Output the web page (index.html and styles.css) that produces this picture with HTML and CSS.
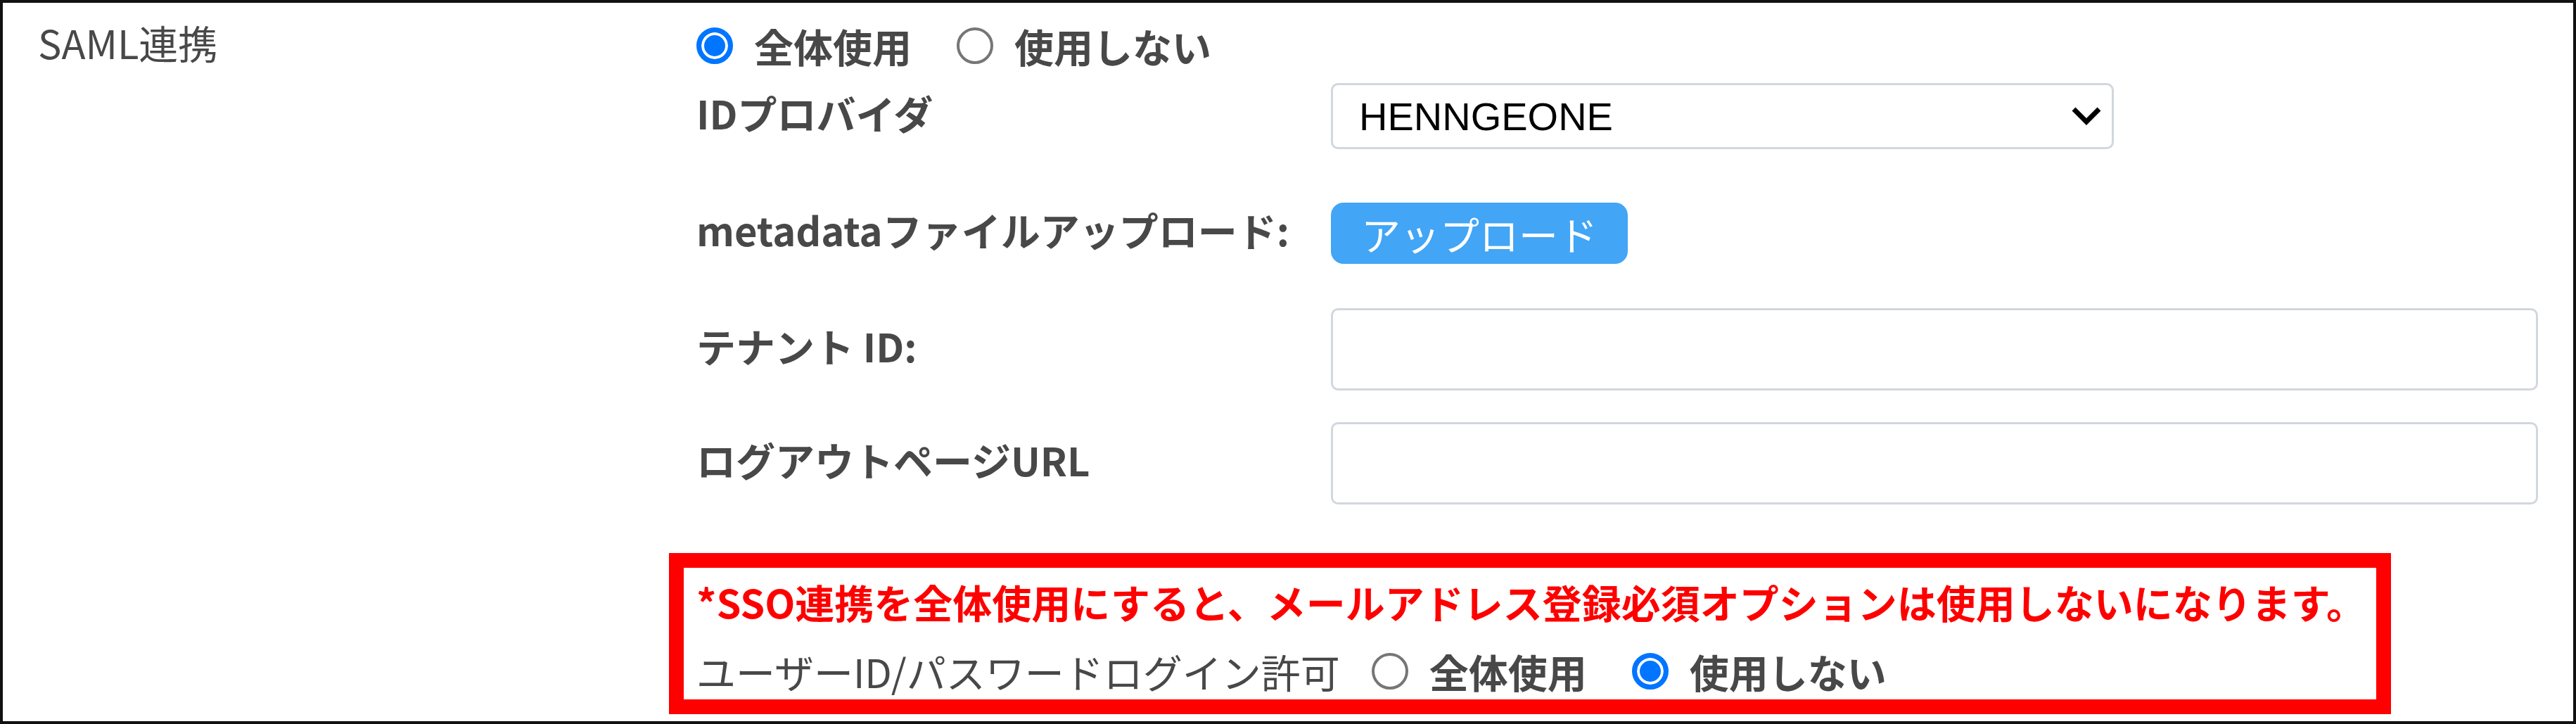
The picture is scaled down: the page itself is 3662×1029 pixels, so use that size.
FILE: index.html
```html
<!DOCTYPE html>
<html lang="ja">
<head>
  <meta charset="utf-8">
  <meta name="viewport" content="width=device-width, initial-scale=1">
  <title>SSO設定</title>
  <link rel="stylesheet" href="styles.css">
</head>
<body>
  <div class="setting-panel">
    <div class="setting-name">SAML連携</div>

    <div class="setting-body">
      <div class="row row-mode">
        <div class="radio-group">
          <label class="radio-option">
            <input type="radio" name="saml" class="radio" checked>
            <span>全体使用</span>
          </label>
          <label class="radio-option">
            <input type="radio" name="saml" class="radio">
            <span>使用しない</span>
          </label>
        </div>
      </div>

      <div class="row field row-provider">
        <span class="field-label">IDプロバイダ</span>
        <div class="select-box">
          <span class="select-value">HENNGEONE</span>
          <svg class="chevron" width="44" height="28" viewBox="0 0 44 28">
            <path d="M4 4 L22 22 L40 4" fill="none" stroke="#000" stroke-width="7"/>
          </svg>
        </div>
      </div>

      <div class="row field row-metadata">
        <span class="field-label">metadataファイルアップロード:</span>
        <button class="upload-button" type="button">アップロード</button>
      </div>

      <div class="row field row-tenant">
        <span class="field-label">テナント ID:</span>
        <input class="text-input" type="text">
      </div>

      <div class="row field row-logout">
        <span class="field-label">ログアウトページURL</span>
        <input class="text-input" type="text">
      </div>

      <div class="notice-box">
        <p class="notice-text">*SSO連携を全体使用にすると、メールアドレス登録必須オプションは使用しないになります。</p>
        <div class="login-permission">
          <span class="login-label">ユーザーID/パスワードログイン許可</span>
          <div class="radio-group">
            <label class="radio-option">
              <input type="radio" name="login" class="radio">
              <span>全体使用</span>
            </label>
            <label class="radio-option">
              <input type="radio" name="login" class="radio" checked>
              <span>使用しない</span>
            </label>
          </div>
        </div>
      </div>
    </div>
  </div>
</body>
</html>
```

FILE: styles.css
```css
* {
  margin: 0;
  padding: 0;
  box-sizing: border-box;
}

body {
  font-family: "Noto Sans CJK JP", "Noto Sans", sans-serif;
  font-size: 56px;
  line-height: 81px;
  color: #484848;
  background: #fff;
}

.setting-panel {
  display: flex;
  width: 3662px;
  height: 1029px;
  border: 4px solid #111;
}

.setting-name {
  width: 947px;
  flex-shrink: 0;
  padding: 15px 0 0 50px;
}

.setting-body {
  flex: 1;
  padding-top: 20px;
}

/* form rows */
.row {
  padding-left: 39px;
}

.row-mode {
  display: flex;
  align-items: center;
  height: 81px;
}

.row-provider {
  margin-top: 13px;
  height: 94px;
}

.row-metadata {
  margin-top: 73px;
  height: 87px;
}

.row-tenant {
  margin-top: 66px;
  height: 117px;
}

.row-logout {
  margin-top: 45px;
  height: 117px;
}

.field {
  display: grid;
  grid-template-columns: 902px auto;
  align-items: center;
}

.field-label {
  font-weight: bold;
  padding-bottom: 12px;
  white-space: nowrap;
}

/* radios */
.radio-group {
  display: flex;
  align-items: center;
  gap: 64px;
}

.radio-option {
  display: flex;
  align-items: center;
  gap: 30px;
  font-weight: bold;
  white-space: nowrap;
  cursor: pointer;
}

.radio {
  appearance: none;
  flex-shrink: 0;
  width: 52px;
  height: 52px;
  border: 4px solid #767676;
  border-radius: 50%;
  background: #fff;
}

.radio:checked {
  border: 7px solid #0075ff;
  background: #0075ff;
  box-shadow: inset 0 0 0 4px #fff;
}

/* controls */
.select-box {
  display: flex;
  align-items: center;
  justify-content: space-between;
  width: 1113px;
  height: 94px;
  padding: 0 14px 0 37px;
  border: 3px solid #d2d7de;
  border-radius: 10px;
  background: #fff;
}

.select-value {
  font-family: "Liberation Sans", Arial, sans-serif;
  color: #000;
}

.chevron {
  display: block;
}

.upload-button {
  justify-self: start;
  height: 87px;
  padding: 0 43px;
  border: none;
  border-radius: 18px;
  background: #42a5f5;
  color: #fff;
  font-family: inherit;
  font-size: 56px;
  line-height: 87px;
}

.text-input {
  width: 1716px;
  height: 117px;
  border: 3px solid #d2d7de;
  border-radius: 10px;
  background: #fff;
}

/* highlighted notice */
.notice-box {
  margin-top: 69px;
  width: 2448px;
  height: 229px;
  padding: 7px 0 0 18px;
  border: 21px solid #ff0000;
}

.notice-text {
  color: #ff0000;
  font-weight: bold;
  white-space: nowrap;
}

.login-permission {
  display: flex;
  align-items: center;
  gap: 45px;
  margin-top: 18px;
  white-space: nowrap;
}
```
